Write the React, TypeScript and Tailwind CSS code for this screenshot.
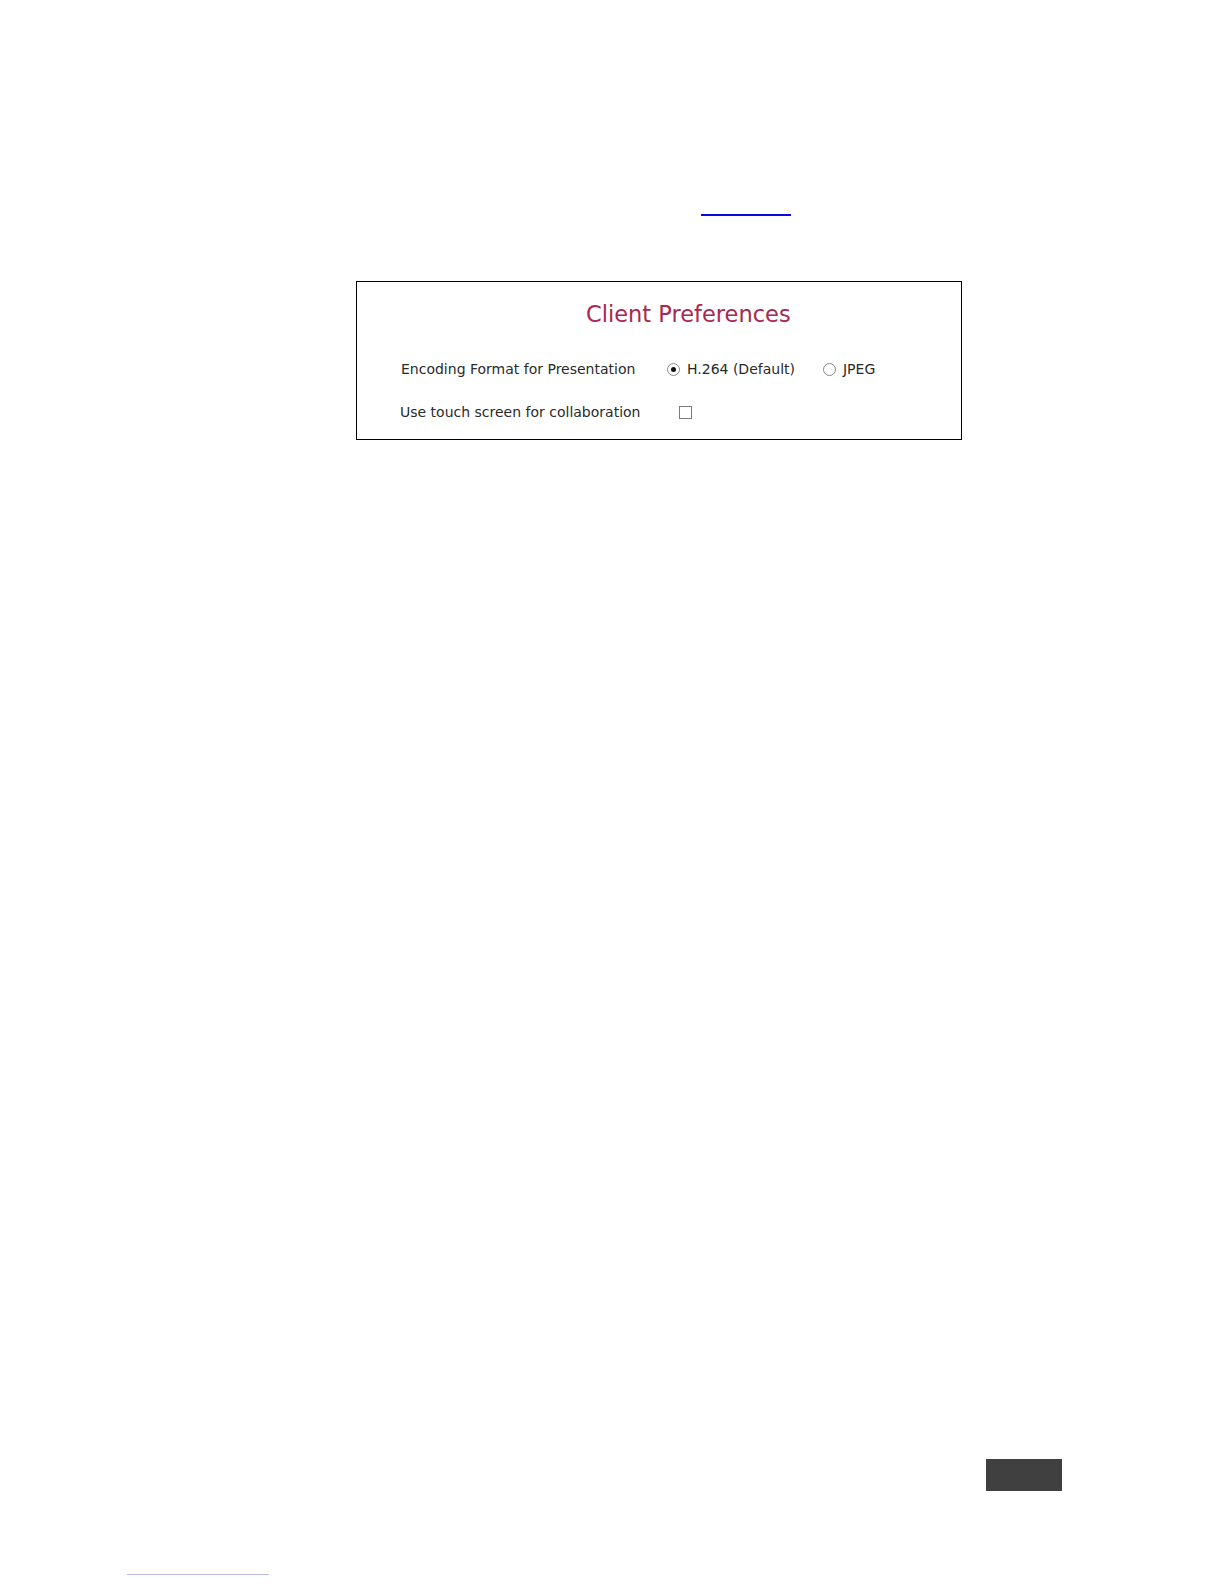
import React from "react";

function Radio({ checked }: { checked?: boolean }) {
  return (
    <span className="flex h-[13px] w-[13px] shrink-0 items-center justify-center rounded-full border border-[#8a8a8a] bg-white">
      {checked ? <span className="h-[5px] w-[5px] rounded-full bg-[#111]" /> : null}
    </span>
  );
}

export default function App() {
  return (
    <div
      className="flex h-[1584px] w-[1224px] flex-col overflow-hidden bg-white"
      style={{ fontFamily: '"DejaVu Sans", Verdana, sans-serif' }}
    >
      <div className="ml-[701px] mt-[214px] h-[2px] w-[90px] bg-[#0b0bdc]" />

      <div className="ml-[356px] mt-[65px] flex h-[159px] w-[606px] flex-col border border-black">
        <div className="ml-[229px] mt-[19px] text-[22.5px] leading-[26px] text-[#a8284f]">
          Client Preferences
        </div>

        <div className="ml-[44px] mt-[32px] flex h-[20px] items-center text-[14px] leading-[20px] text-[#2a2a2a]">
          <span className="w-[266px] shrink-0">Encoding Format for Presentation</span>
          <Radio checked />
          <span className="ml-[7px]">H.264 (Default)</span>
          <span className="ml-[28px]">
            <Radio />
          </span>
          <span className="ml-[7px]">JPEG</span>
        </div>

        <div className="ml-[43px] mt-[23px] flex h-[20px] items-center text-[14px] leading-[20px] text-[#2a2a2a]">
          <span className="w-[279px] shrink-0">Use touch screen for collaboration</span>
          <span className="h-[13px] w-[13px] border border-[#7a7a7a] bg-white" />
        </div>
      </div>

      <div className="ml-[986px] mt-[1019px] h-[32px] w-[76px] bg-[#404040]" />

      <div className="ml-[127px] mt-[83px] h-[1px] w-[142px] bg-[#b4bce8]" />
    </div>
  );
}
